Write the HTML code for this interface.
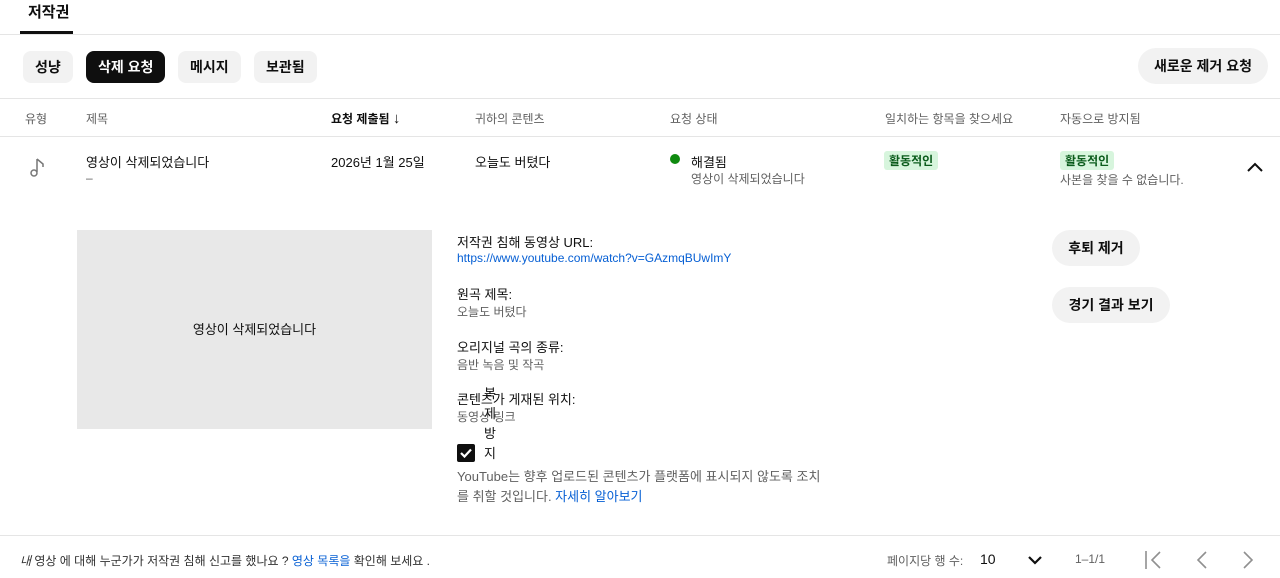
<!DOCTYPE html>
<html><head><meta charset="utf-8"><style>
*{margin:0;padding:0;box-sizing:border-box}
body{width:1280px;height:578px;overflow:hidden;background:#fff;font-family:"Liberation Sans","Noto Sans CJK KR",sans-serif;color:#0f0f0f;position:relative}
.a{position:absolute;white-space:nowrap}
.btn{position:absolute;height:32px;border-radius:8px;background:#f2f2f2;font-size:14px;font-weight:bold;line-height:32px;text-align:center;padding:0 12px;white-space:nowrap}
.hr{position:absolute;left:0;width:1280px;height:1px;background:#e5e5e5}
.h{font-size:12px;color:#606060;top:110px}
.t{font-size:13px}
.s{font-size:12px;color:#606060}
.pill{position:absolute;background:#d7f5dd;color:#0b5c1c;font-size:12px;font-weight:bold;padding:1px 5px;border-radius:3px}
.rb{position:absolute;height:36px;border-radius:18px;background:#f2f2f2;font-size:14px;font-weight:bold;line-height:36px;text-align:center}
</style></head><body>
<div class="a" style="left:28px;top:1px;font-size:15px;font-weight:bold">저작권</div>
<div class="a" style="left:20px;top:31px;width:53px;height:3px;background:#0f0f0f"></div>
<div class="hr" style="top:34px"></div>
<div class="btn" style="left:23px;top:51px">성냥</div>
<div class="btn" style="left:86px;top:51px;background:#0f0f0f;color:#fff">삭제 요청</div>
<div class="btn" style="left:178px;top:51px">메시지</div>
<div class="btn" style="left:254px;top:51px">보관됨</div>
<div class="rb" style="left:1138px;top:48px;width:130px">새로운 제거 요청</div>
<div class="hr" style="top:98px"></div>
<div class="a h" style="left:25px">유형</div>
<div class="a h" style="left:86px">제목</div>
<div class="a h" style="left:331px;color:#0f0f0f;font-weight:bold">요청 제출됨 <span style="font-size:15px;font-weight:normal">↓</span></div>
<div class="a h" style="left:475px">귀하의 콘텐츠</div>
<div class="a h" style="left:670px">요청 상태</div>
<div class="a h" style="left:885px">일치하는 항목을 찾으세요</div>
<div class="a h" style="left:1060px">자동으로 방지됨</div>
<div class="hr" style="top:136px"></div>
<svg class="a" style="left:28px;top:156px" width="20" height="22" viewBox="0 0 20 22"><path d="M9 3v13M9 3l6 5v3" fill="none" stroke="#777" stroke-width="1.5"/><circle cx="6" cy="17" r="3" fill="none" stroke="#777" stroke-width="1.5"/></svg>
<div class="a t" style="left:86px;top:152px">영상이 삭제되었습니다</div>
<div class="a s" style="left:86px;top:171px">–</div>
<div class="a t" style="left:331px;top:152px">2026년 1월 25일</div>
<div class="a t" style="left:475px;top:152px">오늘도 버텼다</div>
<div class="a" style="left:670px;top:154px;width:10px;height:10px;border-radius:50%;background:#0f8a0f"></div>
<div class="a t" style="left:691px;top:152px">해결됨</div>
<div class="a s" style="left:691px;top:170px">영상이 삭제되었습니다</div>
<div class="pill" style="left:884px;top:151px">활동적인</div>
<div class="pill" style="left:1060px;top:151px">활동적인</div>
<div class="a s" style="left:1060px;top:171px">사본을 찾을 수 없습니다.</div>
<svg class="a" style="left:1246px;top:160px" width="18" height="14" viewBox="0 0 18 14"><path d="M2 11l7-7 7 7" fill="none" stroke="#0f0f0f" stroke-width="2"/></svg>
<div class="a" style="left:77px;top:230px;width:355px;height:199px;background:#e8e8e8;font-size:13px;line-height:199px;text-align:center">영상이 삭제되었습니다</div>
<div class="a t" style="left:457px;top:232px">저작권 침해 동영상 URL:</div>
<div class="a" style="left:457px;top:251px;font-size:12px;color:#065fd4">https://www.youtube.com/watch?v=GAzmqBUwImY</div>
<div class="a t" style="left:457px;top:284px">원곡 제목:</div>
<div class="a s" style="left:457px;top:303px">오늘도 버텼다</div>
<div class="a t" style="left:457px;top:337px">오리지널 곡의 종류:</div>
<div class="a s" style="left:457px;top:356px">음반 녹음 및 작곡</div>
<div class="a t" style="left:457px;top:389px">콘텐츠가 게재된 위치:</div>
<div class="a s" style="left:457px;top:408px">동영상 링크</div>
<div class="a" style="left:483px;top:384px;font-size:13px;line-height:20px;width:14px;white-space:normal;text-align:center">복제방지</div>
<div class="a" style="left:457px;top:444px;width:18px;height:18px;border-radius:2px;background:#0f0f0f"></div>
<svg class="a" style="left:457px;top:444px" width="18" height="18" viewBox="0 0 18 18"><path d="M4 9l3.5 3.5L14 5.5" fill="none" stroke="#fff" stroke-width="2.2"/></svg>
<div class="a" style="left:457px;top:467px;font-size:13px;color:#606060;line-height:20px;width:370px;white-space:normal">YouTube는 향후 업로드된 콘텐츠가 플랫폼에 표시되지 않도록 조치를 취할 것입니다. <span style="color:#065fd4">자세히 알아보기</span></div>
<div class="rb" style="left:1052px;top:230px;width:88px">후퇴 제거</div>
<div class="rb" style="left:1052px;top:287px;width:118px">경기 결과 보기</div>
<div class="hr" style="top:535px"></div>
<div class="a" style="left:20px;top:552px;font-size:12px;color:#303030"><i>내</i> 영상 에 대해 누군가가 저작권 침해 신고를 했나요 ? <span style="color:#065fd4">영상 목록을</span> 확인해 보세요 .</div>
<div class="a" style="left:887px;top:552px;font-size:12px;color:#606060">페이지당 행 수:</div>
<div class="a" style="left:980px;top:551px;font-size:14px">10</div>
<svg class="a" style="left:1026px;top:554px" width="18" height="12" viewBox="0 0 18 12"><path d="M3 3l6 6 6-6" fill="none" stroke="#0f0f0f" stroke-width="2.2"/></svg>
<div class="a" style="left:1075px;top:552px;font-size:12px;color:#606060">1–1/1</div>
<svg class="a" style="left:1144px;top:549px" width="120" height="22" viewBox="0 0 120 22"><path d="M2 2v18M16 3l-8 8 8 8M62 3l-8 8 8 8M100 3l8 8-8 8" fill="none" stroke="#909090" stroke-width="1.6"/></svg>
</body></html>
